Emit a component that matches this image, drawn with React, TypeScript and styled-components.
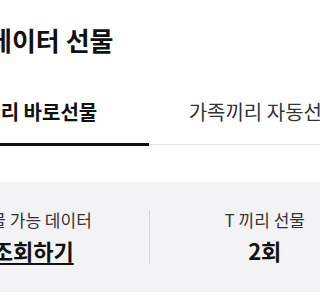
import React from "react";
import styled, { createGlobalStyle } from "styled-components";

const Global = createGlobalStyle`
  html, body {
    margin: 0;
    padding: 0;
    background: #ffffff;
    overflow: hidden;
    font-family: "Noto Sans CJK KR", "Noto Sans", sans-serif;
  }
`;

const Page = styled.div`
  width: 462px;
  margin-left: -82px;
  display: flex;
  flex-direction: column;
`;

const Title = styled.h1`
  margin: 0;
  padding-top: 24px;
  font-size: 26px;
  line-height: 32px;
  font-weight: 700;
  color: #111111;
`;

const TabBar = styled.div`
  display: flex;
  margin-top: 43px;
  border-bottom: 1px solid #e6e6e6;
`;

const Tab = styled.div<{ $active?: boolean }>`
  flex: 1;
  text-align: center;
  font-size: 20px;
  line-height: 26px;
  font-weight: ${(p) => (p.$active ? 700 : 400)};
  color: ${(p) => (p.$active ? "#111111" : "#333333")};
  padding-bottom: 18px;
  border-bottom: 3px solid ${(p) => (p.$active ? "#111111" : "transparent")};
  margin-bottom: -2px;
`;

const InfoBox = styled.div`
  margin-top: 37px;
  background: #f3f3f5;
  padding: 28px 0;
  display: flex;
  align-items: stretch;
`;

const Column = styled.div`
  flex: 1;
  display: flex;
  flex-direction: column;
  align-items: center;
  gap: 7px;
`;

const Divider = styled.div`
  width: 1px;
  background: #d6d6d8;
`;

const Label = styled.div`
  font-size: 17px;
  line-height: 20px;
  color: #333333;
`;

const Value = styled.div<{ $link?: boolean }>`
  font-size: 22px;
  line-height: 27px;
  font-weight: 700;
  color: #111111;
  text-decoration: ${(p) => (p.$link ? "underline" : "none")};
  text-decoration-thickness: 2px;
  text-underline-offset: 3px;
`;

export default function App() {
  return (
    <>
      <Global />
      <Page>
        <Title>T끼리 데이터 선물</Title>
        <TabBar>
          <Tab $active>T끼리 바로선물</Tab>
          <Tab>가족끼리 자동선물</Tab>
        </TabBar>
        <InfoBox>
          <Column>
            <Label>선물 가능 데이터</Label>
            <Value $link>조회하기</Value>
          </Column>
          <Divider />
          <Column>
            <Label>T 끼리 선물</Label>
            <Value>2회</Value>
          </Column>
        </InfoBox>
      </Page>
    </>
  );
}
